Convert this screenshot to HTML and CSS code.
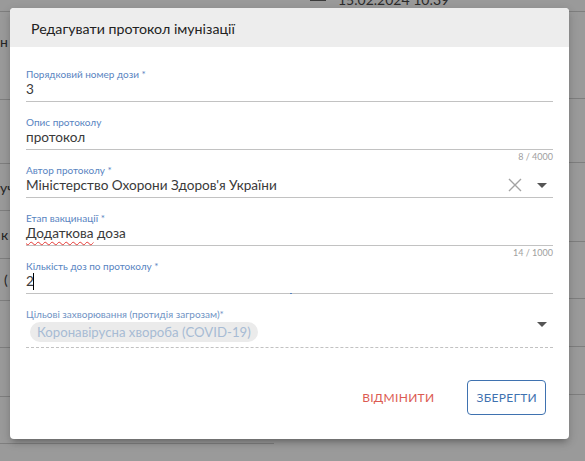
FILE: index.html
```html
<!DOCTYPE html>
<html lang="uk">
<head>
<meta charset="utf-8">
<title>Редагувати протокол імунізації</title>
<link rel="stylesheet" href="styles.css">
</head>
<body>
<div class="page">
  <div class="topbar">
    <span class="top-icon"></span>
    <span class="top-date">15.02.2024 10:39</span>
  </div>
  <div class="cols">
    <div class="col col-left">
      <div class="row h88 t-top"><span class="bg-text">н</span></div>
      <div class="row h64"></div>
      <div class="row h47"><span class="bg-text">уч</span></div>
      <div class="row h48"><span class="bg-text ind1">к</span></div>
      <div class="row h42"><span class="bg-text ind4">(</span></div>
      <div class="row h47"></div>
      <div class="row h49"></div>
      <div class="row h47"></div>
    </div>
    <div class="col col-right">
      <div class="row h87"></div>
      <div class="row h64"></div>
      <div class="row h79"></div>
      <div class="row h57"></div>
      <div class="row h48"></div>
      <div class="row h48"></div>
    </div>
  </div>
</div>

<div class="dialog">
  <div class="dialog-header">Редагувати протокол імунізації</div>
  <div class="dialog-body">
    <div class="field">
      <div class="field-label">Порядковий номер дози *</div>
      <div class="field-control"><span class="field-value">3</span></div>
      <div class="field-details"></div>
    </div>
    <div class="field">
      <div class="field-label">Опис протоколу</div>
      <div class="field-control"><span class="field-value">протокол</span></div>
      <div class="field-details">8 / 4000</div>
    </div>
    <div class="field">
      <div class="field-label">Автор протоколу *</div>
      <div class="field-control">
        <span class="field-value">Міністерство Охорони Здоров'я України</span>
        <svg class="icon-clear" width="14" height="14" viewBox="0 0 14 14"><path d="M1 1 L13 13 M13 1 L1 13" stroke="#a3a3a3" stroke-width="1.4" fill="none"/></svg>
        <svg class="icon-arrow" width="10" height="5" viewBox="0 0 10 5"><path d="M0 0 L10 0 L5 5 Z" fill="#555"/></svg>
      </div>
      <div class="field-details"></div>
    </div>
    <div class="field">
      <div class="field-label">Етап вакцинації *</div>
      <div class="field-control"><span class="field-value"><span class="misspelled">Додаткова</span> доза</span></div>
      <div class="field-details">14 / 1000</div>
    </div>
    <div class="field">
      <div class="field-label">Кількість доз по протоколу *</div>
      <div class="field-control focused"><span class="field-value">2<span class="caret"></span></span></div>
      <div class="field-details"></div>
    </div>
    <div class="field disabled">
      <div class="field-label">Цільові захворювання (протидія загрозам)*</div>
      <div class="field-control chips">
        <span class="chip">Коронавірусна хвороба (COVID-19)</span>
        <span class="spacer"></span>
        <svg class="icon-arrow" width="10" height="5" viewBox="0 0 10 5"><path d="M0 0 L10 0 L5 5 Z" fill="#555"/></svg>
      </div>
    </div>
  </div>
  <div class="dialog-actions">
    <button class="btn btn-cancel">Відмінити</button>
    <button class="btn btn-save">Зберегти</button>
  </div>
</div>
</body>
</html>
```

FILE: styles.css
```css
* { box-sizing: border-box; }
html, body { margin: 0; padding: 0; }
body {
  width: 585px;
  height: 461px;
  overflow: hidden;
  background: #9a9a9a;
  font-family: Lato, "Noto Sans", sans-serif;
  position: relative;
}

/* Backdrop page (dimmed) */
.page {
  width: 585px;
  height: 461px;
  color: #262626;
  font-size: 14px;
}
.topbar {
  height: 12px;
  border-bottom: 1px solid #7e7e7e;
  display: flex;
  align-items: flex-end;
  padding-left: 310px;
  gap: 12px;
}
.top-icon {
  width: 16px;
  height: 2px;
  background: #3a3a3a;
  margin-bottom: 10px;
}
.top-date {
  line-height: 14px;
  margin-bottom: 4px;
  color: #2a2a2a;
}
.cols {
  display: flex;
  justify-content: space-between;
}
.col { display: flex; flex-direction: column; }
.col-left { width: 274px; }
.col-right { width: 300px; }
.row {
  border-bottom: 1px solid #7e7e7e;
  display: flex;
  align-items: center;
}
.row.t-top { align-items: flex-start; padding-top: 21px; }
.h42 { height: 42px; } .h47 { height: 47px; } .h48 { height: 48px; }
.h49 { height: 49px; } .h57 { height: 57px; } .h64 { height: 64px; }
.h79 { height: 79px; } .h87 { height: 87px; } .h88 { height: 88px; }
.bg-text { color: #262626; }
.ind1 { padding-left: 1px; }
.ind4 { padding-left: 4px; }

/* Dialog */
.dialog {
  position: absolute;
  left: 10px;
  top: 8px;
  width: 559px;
  height: 431px;
  background: #fff;
  border-radius: 4px;
  overflow: hidden;
  display: flex;
  flex-direction: column;
  box-shadow: 0 5px 6px -3px rgba(0,0,0,.25), 0 3px 10px 1px rgba(0,0,0,.14);
}
.dialog-header {
  height: 39px;
  flex: none;
  background: #ededed;
  display: flex;
  align-items: center;
  padding-left: 21px;
  padding-top: 1px;
  font-size: 14.2px;
  color: #222;
}
.dialog-body {
  padding: 21px 16px 0;
}
.field {
  display: flex;
  flex-direction: column;
  position: relative;
}
.field-label {
  font-size: 10px;
  line-height: 13px;
  height: 13px;
  color: #5884bf;
}
.field-control {
  height: 21px;
  border-bottom: 1px solid #c2c2c2;
  display: flex;
  align-items: flex-start;
  padding-right: 6px;
  position: relative;
}
.field-value {
  flex: 1;
  font-size: 13.6px;
  line-height: 17px;
  color: #3a3a3a;
  display: flex;
  align-items: center;
  white-space: pre;
}
.field-details {
  height: 14px;
  font-size: 9px;
  line-height: 14px;
  color: #a0a0a0;
  text-align: right;
}
.icon-clear { margin-right: 15px; margin-top: 1px; }
.field-control .icon-arrow { margin-top: 6px; }
.misspelled {
  text-decoration: underline wavy #e53935;
  text-decoration-thickness: 1px;
  text-underline-offset: 3px;
}
.caret {
  display: inline-block;
  width: 1px;
  height: 17px;
  background: #000;
  margin-left: -1px;
}
.field-control.focused::after {
  content: "";
  position: absolute;
  left: 50%;
  bottom: -1px;
  width: 2px;
  height: 1px;
  background: #5884bf;
}
.field.disabled .field-label { color: #6f93c4; }
.field-control.chips {
  height: 27px;
  padding-top: 1px;
  border-bottom: 1px dashed #c2c2c2;
  align-items: flex-start;
}
.chip {
  margin-left: 4px;
  height: 20px;
  padding: 0 7px;
  border-radius: 10px;
  background: #ebebeb;
  color: #a7bbd4;
  font-size: 13.2px;
  line-height: 20px;
}
.spacer { flex: 1; }
.field-control.chips .icon-arrow { margin-top: 0; }

.dialog-actions {
  margin-top: auto;
  display: flex;
  justify-content: flex-end;
  align-items: center;
  gap: 24px;
  padding: 0 23px 24px;
}
.btn {
  height: 35px;
  padding: 0 8px;
  font-family: inherit;
  font-size: 12px;
  text-transform: uppercase;
  letter-spacing: 0.3px;
  background: transparent;
  border: 1px solid transparent;
  border-radius: 4px;
}
.btn-cancel { color: #dc5b52; }
.btn-save { color: #3f72b0; border-color: #3f72b0; }
```
